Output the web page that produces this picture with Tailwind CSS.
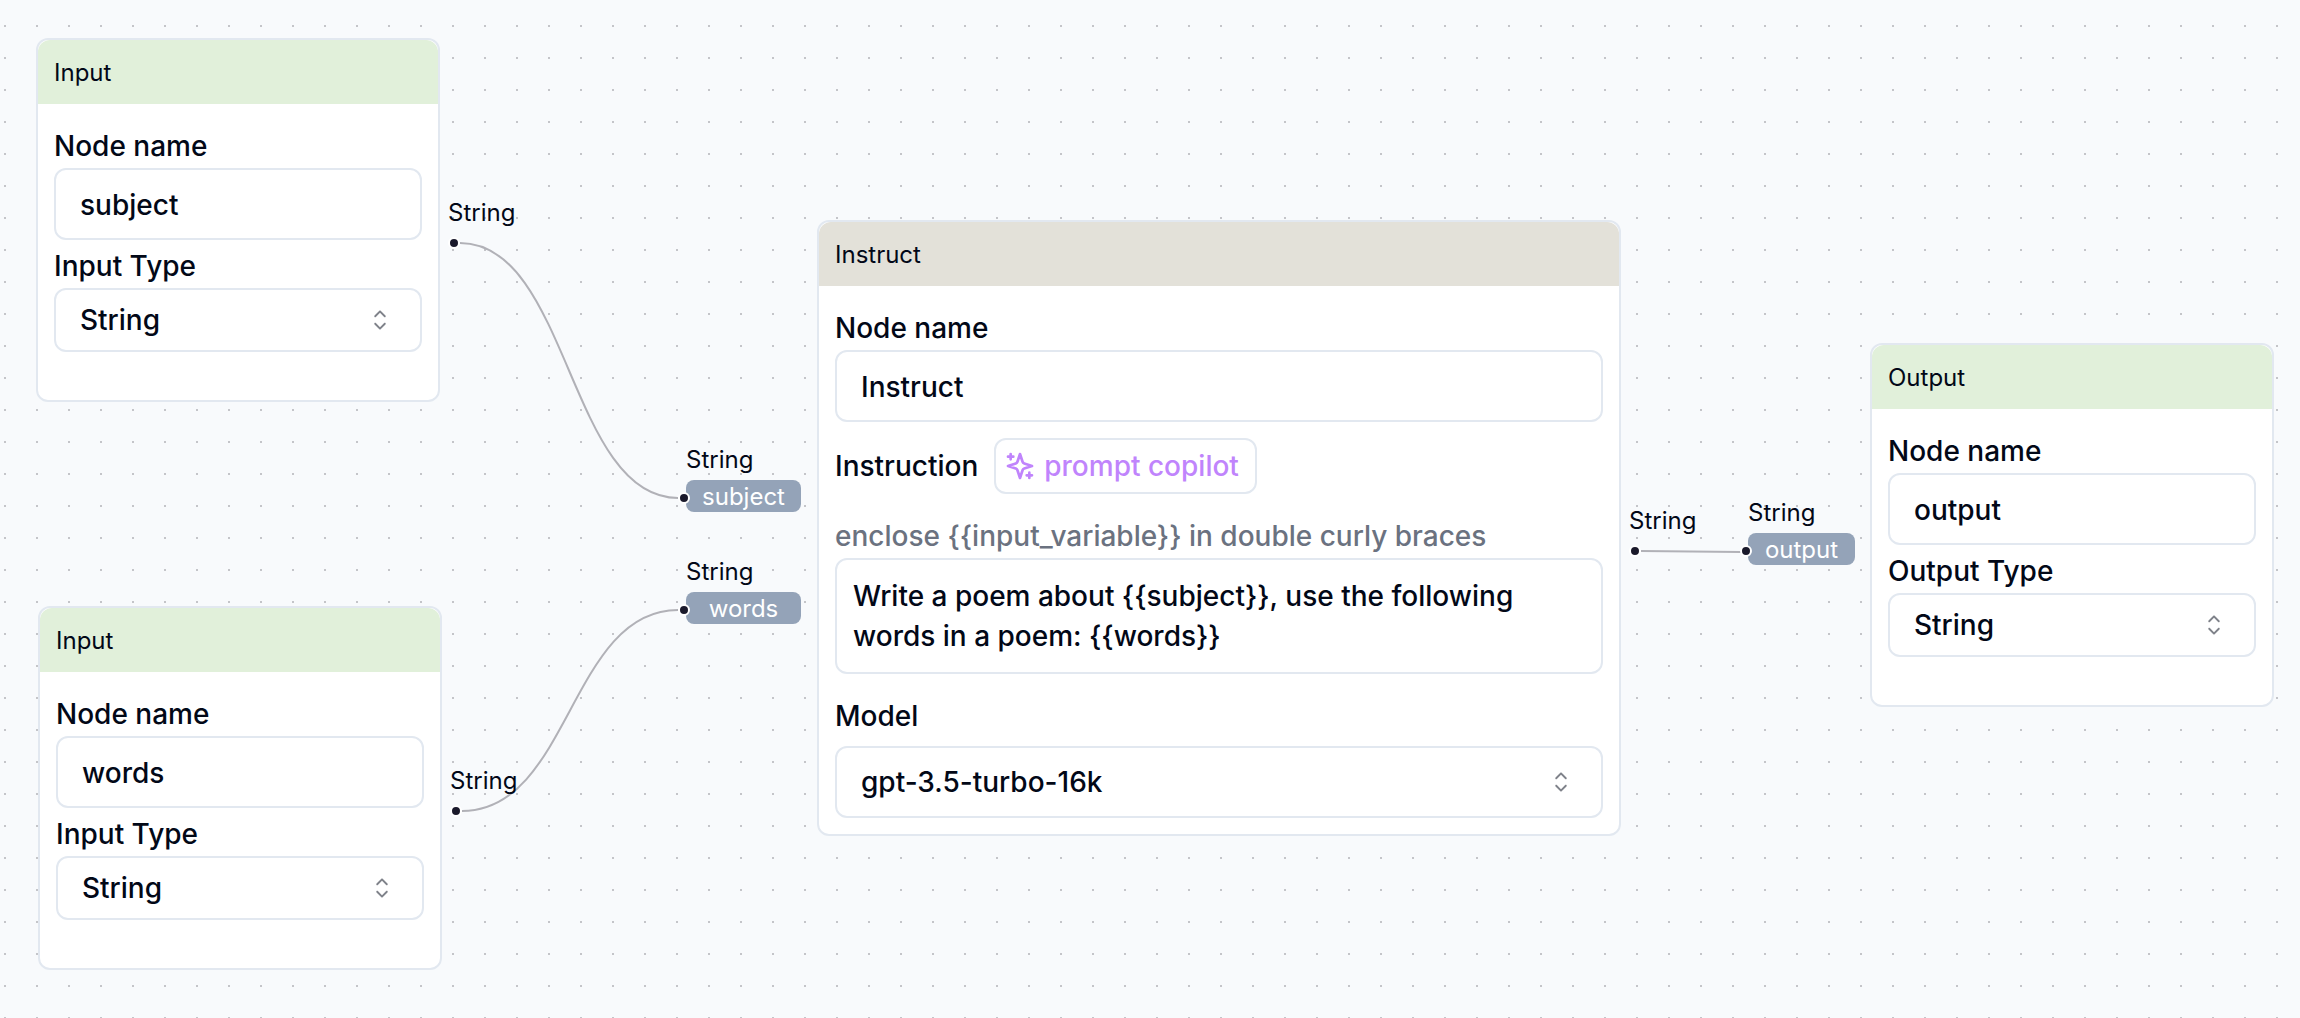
<!DOCTYPE html>
<html lang="en">
<head>
<meta charset="utf-8">
<meta name="viewport" content="width=device-width, initial-scale=1">
<title>Flow editor</title>
<script src="https://cdn.jsdelivr.net/npm/@tailwindcss/browser@4"></script>
</head>
<body class="bg-[#f8fafc] text-[#020817] font-['Inter',sans-serif]">
<main class="relative min-h-screen w-full overflow-hidden">

  <!-- Dotted grid and edges -->
  <svg class="absolute inset-0 h-full w-full" aria-hidden="true">
    <defs>
      <pattern id="grid" width="32" height="32" patternUnits="userSpaceOnUse"><rect x="4" y="25" width="2" height="2" fill="#c4c5c9"/></pattern>
      <symbol id="caret" viewBox="0 0 15 15"><path fill="currentColor" fill-rule="evenodd" d="M4.93179 5.43179C4.75605 5.60753 4.75605 5.89245 4.93179 6.06819C5.10753 6.24392 5.39245 6.24392 5.56819 6.06819L7.49999 4.13638L9.43179 6.06819C9.60753 6.24392 9.89245 6.24392 10.0682 6.06819C10.2439 5.89245 10.2439 5.60753 10.0682 5.43179L7.81819 3.18179C7.73379 3.0974 7.61933 3.04999 7.49999 3.04999C7.38064 3.04999 7.26618 3.0974 7.18179 3.18179L4.93179 5.43179ZM10.0682 9.56819C10.2439 9.39245 10.2439 9.10753 10.0682 8.93179C9.89245 8.75606 9.60753 8.75606 9.43179 8.93179L7.49999 10.8636L5.56819 8.93179C5.39245 8.75606 5.10753 8.75606 4.93179 8.93179C4.75605 9.10753 4.75605 9.39245 4.93179 9.56819L7.18179 11.8182C7.35753 11.9939 7.64245 11.9939 7.81819 11.8182L10.0682 9.56819Z"/></symbol>
    </defs>
    <rect width="100%" height="100%" fill="url(#grid)"/>
    <g fill="none" stroke="#b1b1b7" stroke-width="2">
      <path d="M460 243C569 243 569 498 678 498"/>
      <path d="M462 811C570 811 570 610 678 610"/>
      <path d="M1641 551L1741 552"/>
    </g>
  </svg>

  <!-- Input node: subject -->
  <section class="absolute left-[36px] top-[38px] w-[404px] rounded-xl border-2 border-[#e2e8f0] bg-white">
    <h2 class="flex h-16 items-center rounded-t-xl bg-[#e1f0da] px-4 pt-0.5 text-2xl">Input</h2>
    <div class="px-4 pt-4 pb-12 text-[28px] font-medium">
      <label for="in1-name" class="block pt-1 leading-11">Node name</label>
      <input id="in1-name" value="subject" class="block h-18 w-full rounded-xl border-2 border-[#e2e8f0] bg-white px-6 pt-0.5 leading-10">
      <label for="in1-type" class="block pt-1 leading-11">Input Type</label>
      <div class="relative">
        <select id="in1-type" class="block h-16 w-full appearance-none rounded-xl border-2 border-[#e2e8f0] bg-white px-6 leading-10"><option>String</option></select>
        <svg class="pointer-events-none absolute inset-y-0 right-[26px] my-auto size-8 opacity-50" aria-hidden="true"><use href="#caret"/></svg>
      </div>
    </div>
  </section>
  <div class="absolute left-[448px] top-[197px] flex flex-col gap-2">
    <span class="text-2xl leading-8">String</span>
    <span class="size-3 rounded-full border-2 border-white bg-[#1a192b]"></span>
  </div>

  <!-- Input node: words -->
  <section class="absolute left-[38px] top-[606px] w-[404px] rounded-xl border-2 border-[#e2e8f0] bg-white">
    <h2 class="flex h-16 items-center rounded-t-xl bg-[#e1f0da] px-4 pt-0.5 text-2xl">Input</h2>
    <div class="px-4 pt-4 pb-12 text-[28px] font-medium">
      <label for="in2-name" class="block pt-1 leading-11">Node name</label>
      <input id="in2-name" value="words" class="block h-18 w-full rounded-xl border-2 border-[#e2e8f0] bg-white px-6 pt-0.5 leading-10">
      <label for="in2-type" class="block pt-1 leading-11">Input Type</label>
      <div class="relative">
        <select id="in2-type" class="block h-16 w-full appearance-none rounded-xl border-2 border-[#e2e8f0] bg-white px-6 leading-10"><option>String</option></select>
        <svg class="pointer-events-none absolute inset-y-0 right-[26px] my-auto size-8 opacity-50" aria-hidden="true"><use href="#caret"/></svg>
      </div>
    </div>
  </section>
  <div class="absolute left-[450px] top-[765px] flex flex-col gap-2">
    <span class="text-2xl leading-8">String</span>
    <span class="size-3 rounded-full border-2 border-white bg-[#1a192b]"></span>
  </div>

  <!-- Instruct node with its two input ports -->
  <div class="absolute left-[686px] top-[444px] flex w-[115px] flex-col gap-11 text-2xl">
    <div class="flex flex-col gap-1">
      <span class="leading-8">String</span>
      <div class="relative rounded-lg bg-[#94a3b8] pt-0.5 text-center leading-[30px] text-white">subject<span class="absolute top-3 -left-2 size-3 rounded-full border-2 border-white bg-[#1a192b]"></span></div>
    </div>
    <div class="flex flex-col gap-1">
      <span class="leading-8">String</span>
      <div class="relative rounded-lg bg-[#94a3b8] pt-0.5 text-center leading-[30px] text-white">words<span class="absolute top-3 -left-2 size-3 rounded-full border-2 border-white bg-[#1a192b]"></span></div>
    </div>
  </div>
  <section class="absolute left-[817px] top-[220px] w-[804px] rounded-xl border-2 border-[#e2e8f0] bg-white">
    <h2 class="flex h-16 items-center rounded-t-xl bg-[#e3e1d9] px-4 pt-0.5 text-2xl">Instruct</h2>
    <div class="p-4 text-[28px] font-medium">
      <label for="ins-name" class="block pt-1 leading-11">Node name</label>
      <input id="ins-name" value="Instruct" class="block h-18 w-full rounded-xl border-2 border-[#e2e8f0] bg-white px-6 pt-0.5 leading-10">
      <div class="my-4 flex items-center gap-4 leading-10">
        <label for="ins-text">Instruction</label>
        <button type="button" class="flex h-14 items-center gap-2 rounded-xl border-2 border-[#e2e8f0] bg-white pr-4 pl-2 text-[#c084fc]">
          <svg class="size-8" viewBox="0 0 24 24" fill="none" stroke="currentColor" stroke-width="2" stroke-linecap="round" stroke-linejoin="round" aria-hidden="true"><path d="m12 3-1.912 5.813a2 2 0 0 1-1.275 1.275L3 12l5.813 1.912a2 2 0 0 1 1.275 1.275L12 21l1.912-5.813a2 2 0 0 1 1.275-1.275L21 12l-5.813-1.912a2 2 0 0 1-1.275-1.275L12 3Z"/><path d="M5 3v4M19 17v4M3 5h4M17 19h4"/></svg>
          prompt copilot
        </button>
      </div>
      <p class="pt-1 leading-11 text-[#6b7280]">enclose {{input_variable}} in double curly braces</p>
      <textarea id="ins-text" class="block h-[116px] w-full resize-none overflow-hidden rounded-xl border-2 border-[#e2e8f0] bg-white p-4 leading-10">Write a poem about {{subject}}, use the following words in a poem: {{words}}</textarea>
      <label for="ins-model" class="mt-4 mb-2 block pt-1 leading-11">Model</label>
      <div class="relative">
        <select id="ins-model" class="block h-18 w-full appearance-none rounded-xl border-2 border-[#e2e8f0] bg-white px-6 leading-10"><option>gpt-3.5-turbo-16k</option></select>
        <svg class="pointer-events-none absolute inset-y-0 right-[26px] my-auto size-8 opacity-50" aria-hidden="true"><use href="#caret"/></svg>
      </div>
    </div>
  </section>
  <div class="absolute left-[1629px] top-[505px] flex flex-col gap-2">
    <span class="text-2xl leading-8">String</span>
    <span class="size-3 rounded-full border-2 border-white bg-[#1a192b]"></span>
  </div>

  <!-- Output node with its input port -->
  <div class="absolute left-[1748px] top-[497px] flex w-[107px] flex-col gap-1 text-2xl">
    <span class="leading-8">String</span>
    <div class="relative rounded-lg bg-[#94a3b8] pt-0.5 text-center leading-[30px] text-white">output<span class="absolute top-3 -left-2 size-3 rounded-full border-2 border-white bg-[#1a192b]"></span></div>
  </div>
  <section class="absolute left-[1870px] top-[343px] w-[404px] rounded-xl border-2 border-[#e2e8f0] bg-white">
    <h2 class="flex h-16 items-center rounded-t-xl bg-[#e1f0da] px-4 pt-0.5 text-2xl">Output</h2>
    <div class="px-4 pt-4 pb-12 text-[28px] font-medium">
      <label for="out-name" class="block pt-1 leading-11">Node name</label>
      <input id="out-name" value="output" class="block h-18 w-full rounded-xl border-2 border-[#e2e8f0] bg-white px-6 pt-0.5 leading-10">
      <label for="out-type" class="block pt-1 leading-11">Output Type</label>
      <div class="relative">
        <select id="out-type" class="block h-16 w-full appearance-none rounded-xl border-2 border-[#e2e8f0] bg-white px-6 leading-10"><option>String</option></select>
        <svg class="pointer-events-none absolute inset-y-0 right-[26px] my-auto size-8 opacity-50" aria-hidden="true"><use href="#caret"/></svg>
      </div>
    </div>
  </section>
</main>
</body>
</html>
